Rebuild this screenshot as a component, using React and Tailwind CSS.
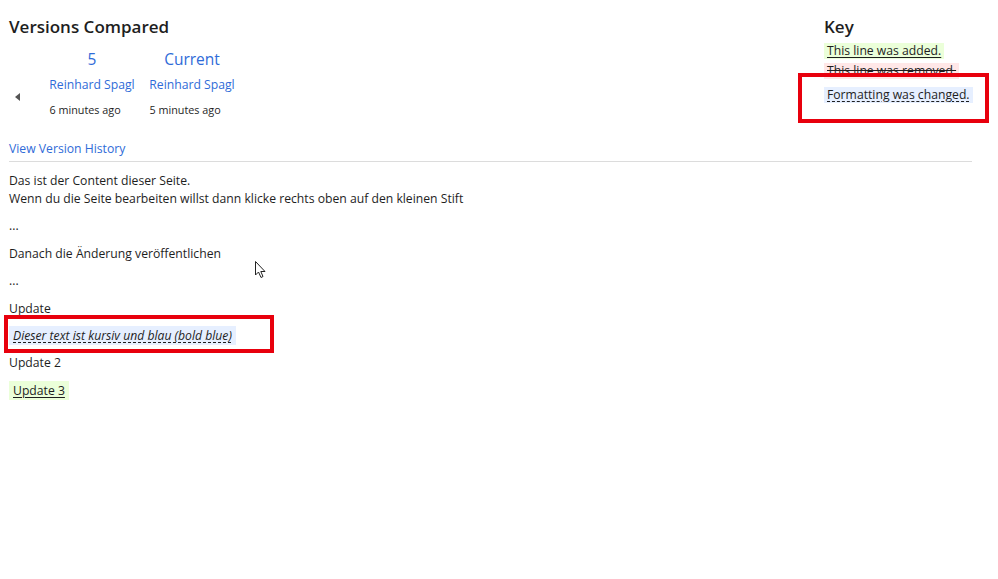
import React from "react";

const font = { fontFamily: '"Open Sans", "Noto Sans", sans-serif' };

const versions = [
  { label: "5", author: "Reinhard Spagl", when: "6 minutes ago" },
  { label: "Current", author: "Reinhard Spagl", when: "5 minutes ago" },
];

const App = () => {
  return (
    <div className="relative w-[998px] h-[579px] bg-white text-[#1e1e1e] overflow-hidden" style={font}>
      <div className="pl-[9px] pr-[26px] pt-[14px]">
        {/* Header */}
        <div className="flex justify-between">
          <div>
            <h2 className="text-[17px] font-semibold leading-[26px]">Versions Compared</h2>
            <div className="flex mt-[6px]">
              <div className="w-[33px] flex items-center pt-[24px]">
                <span className="ml-[6px] w-0 h-0 border-y-[4px] border-y-transparent border-r-[5px] border-r-[#555]"></span>
              </div>
              {versions.map((v) => (
                <div key={v.label} className="w-[100px] flex flex-col items-center">
                  <div className="text-[15.5px] leading-[26px] text-[#2f6bd8]">{v.label}</div>
                  <div className="text-[12.2px] leading-[25px] text-[#2f6bd8] whitespace-nowrap">{v.author}</div>
                  <div className="w-[85px] text-[10.8px] leading-[26px] whitespace-nowrap">{v.when}</div>
                </div>
              ))}
            </div>
          </div>
          <div className="w-[148px]">
            <h2 className="text-[17px] font-semibold leading-[26px]">Key</h2>
            <div className="flex flex-col items-start text-[12.2px] leading-[16px] gap-[4px] whitespace-nowrap">
              <span className="bg-[#ebffd9] px-[3px] mt-[3px] underline underline-offset-2">This line was added.</span>
              <span className="bg-[#ffe7e7] px-[3px] line-through">This line was removed.</span>
              <span className="bg-[#e6efff] px-[3px] mt-[4px] underline decoration-dashed underline-offset-2">Formatting was changed.</span>
            </div>
          </div>
        </div>

        {/* Version history link */}
        <div className="mt-[16px] pb-[2px] border-b border-[#dcdcdc] text-[12.2px] leading-[20px] text-[#2f6bd8]">
          View Version History
        </div>

        {/* Content */}
        <div className="mt-[10px] text-[12.2px] leading-[18px]">
          <p className="mb-[9.4px]">
            Das ist der Content dieser Seite.
            <br />
            Wenn du die Seite bearbeiten willst dann klicke rechts oben auf den kleinen Stift
          </p>
          <p className="mb-[9.4px]">...</p>
          <p className="mb-[9.4px]">Danach die Änderung veröffentlichen</p>
          <p className="mb-[9.4px]">...</p>
          <p className="mb-[9.4px]">Update</p>
          <p className="mb-[9.4px]">
            <span className="bg-[#e6efff] px-[4px] py-[1px] italic underline decoration-dashed underline-offset-2">
              Dieser text ist kursiv und blau (bold blue)
            </span>
          </p>
          <p className="mb-[9.4px]">Update 2</p>
          <p className="mb-[9.4px]">
            <span className="bg-[#ebffd9] px-[4px] py-[1px] underline underline-offset-2">Update 3</span>
          </p>
        </div>
      </div>

      {/* Annotation boxes */}
      <div className="absolute left-[798px] top-[73px] w-[191px] h-[50px] border-[4px] border-[#e8000d]"></div>
      <div className="absolute left-[4px] top-[315px] w-[270px] h-[38px] border-[4px] border-[#e8000d]"></div>

      {/* Mouse cursor */}
      <svg className="absolute left-[255px] top-[261px]" width="12" height="18" viewBox="0 0 12 18">
        <path d="M0.5 0.5 L0.5 14 L3.5 11 L6 16.5 L8 15.5 L5.8 10.5 L10 10.5 Z" fill="#fff" stroke="#222" strokeWidth="1" />
      </svg>
    </div>
  );
};

export default App;
